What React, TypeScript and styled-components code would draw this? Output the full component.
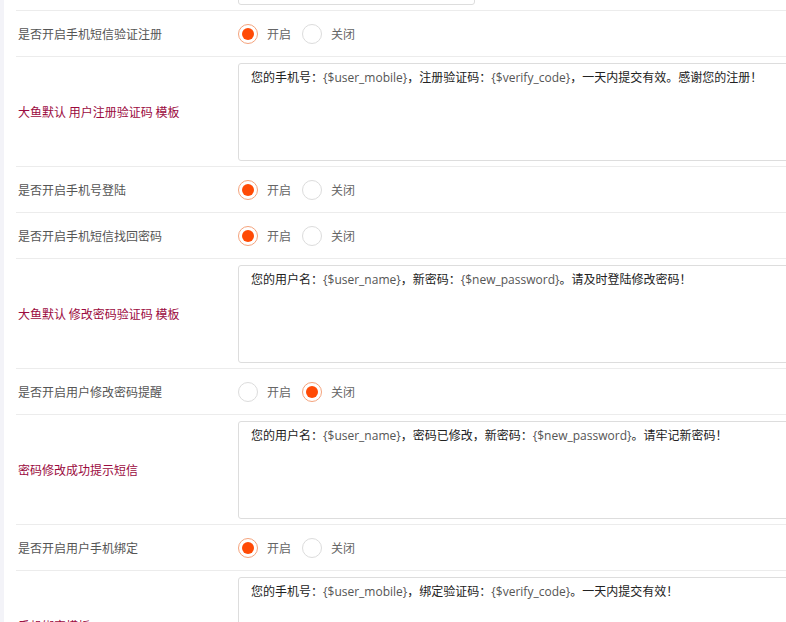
import React from "react";
import styled, { createGlobalStyle } from "styled-components";

const Global = createGlobalStyle`
  html, body { margin: 0; padding: 0; background: #fff; overflow: hidden; }
  body { font-family: "Open Sans", "Noto Sans CJK SC", sans-serif; font-size: 12px; color: #555; }
`;

const Page = styled.div`
  display: flex;
  width: 786px;
  height: 622px;
  overflow: hidden;
`;

const SideStrip = styled.div`
  width: 4px;
  flex: none;
  background: #f3f3f8;
`;

const Form = styled.div`
  flex: 1;
  padding-left: 12px;
  margin-top: -28px;
`;

const Row = styled.div<{ $tall?: boolean }>`
  display: flex;
  align-items: center;
  border-bottom: 1px solid #ececec;
  height: ${(p) => (p.$tall ? 109 : 45)}px;
  padding: 0;
`;

const TopRow = styled(Row)`
  height: 38px;
  align-items: flex-start;
`;

const Label = styled.div<{ $accent?: boolean }>`
  width: 220px;
  flex: none;
  padding-left: 2px;
  font-size: 12px;
  color: ${(p) => (p.$accent ? "#9b0a3e" : "#555")};
  font-family: "Noto Sans CJK SC", sans-serif;
`;

const Field = styled.div`
  flex: 1;
  min-width: 0;
`;

const Input = styled.div`
  width: 235px;
  height: 29px;
  border: 1px solid #ddd;
  border-radius: 3px;
  margin-top: 2px;
`;

const TextArea = styled.div`
  width: 580px;
  height: 82px;
  border: 1px solid #ddd;
  border-radius: 3px;
  box-sizing: content-box;
  padding: 6px 12px 8px;
  color: #222;
  font-size: 12px;
  line-height: 16px;
  font-family: "Open Sans", "Noto Sans CJK SC", sans-serif;
  white-space: nowrap;
`;

const Var = styled.span`
  color: #555;
`;

const RadioGroup = styled.div`
  display: flex;
  align-items: center;
`;

const RadioItem = styled.label`
  display: flex;
  align-items: center;
  margin-right: 11px;
  color: #666;
  font-family: "Noto Sans CJK SC", sans-serif;
  font-size: 12px;
`;

const Circle = styled.span<{ $on?: boolean }>`
  width: 18px;
  height: 18px;
  border-radius: 50%;
  border: 1px solid ${(p) => (p.$on ? "#f5a37c" : "#dcdcdc")};
  display: flex;
  align-items: center;
  justify-content: center;
  margin-right: 9px;
  background: #fff;
  &::after {
    content: "";
    display: ${(p) => (p.$on ? "block" : "none")};
    width: 12px;
    height: 12px;
    border-radius: 50%;
    background: #ff4a05;
  }
`;

const Radio = ({ on }: { on: boolean }) => (
  <RadioGroup>
    <RadioItem>
      <Circle $on={on} />
      开启
    </RadioItem>
    <RadioItem>
      <Circle $on={!on} />
      关闭
    </RadioItem>
  </RadioGroup>
);

type Part = string | { v: string };

const Tpl = ({ parts }: { parts: Part[] }) => (
  <TextArea>
    {parts.map((p, i) => (typeof p === "string" ? <React.Fragment key={i}>{p}</React.Fragment> : <Var key={i}>{p.v}</Var>))}
  </TextArea>
);

export default function App() {
  return (
    <Page>
      <Global />
      <SideStrip />
      <Form>
        <TopRow>
          <Label />
          <Field>
            <Input />
          </Field>
        </TopRow>
        <Row>
          <Label>是否开启手机短信验证注册</Label>
          <Radio on={true} />
        </Row>
        <Row $tall>
          <Label $accent>大鱼默认 用户注册验证码 模板</Label>
          <Field>
            <Tpl parts={["您的手机号：", { v: "{$user_mobile}" }, "，注册验证码：", { v: "{$verify_code}" }, "，一天内提交有效。感谢您的注册！"]} />
          </Field>
        </Row>
        <Row>
          <Label>是否开启手机号登陆</Label>
          <Radio on={true} />
        </Row>
        <Row>
          <Label>是否开启手机短信找回密码</Label>
          <Radio on={true} />
        </Row>
        <Row $tall>
          <Label $accent>大鱼默认 修改密码验证码 模板</Label>
          <Field>
            <Tpl parts={["您的用户名：", { v: "{$user_name}" }, "，新密码：", { v: "{$new_password}" }, "。请及时登陆修改密码！"]} />
          </Field>
        </Row>
        <Row>
          <Label>是否开启用户修改密码提醒</Label>
          <Radio on={false} />
        </Row>
        <Row $tall>
          <Label $accent>密码修改成功提示短信</Label>
          <Field>
            <Tpl parts={["您的用户名：", { v: "{$user_name}" }, "，密码已修改，新密码：", { v: "{$new_password}" }, "。请牢记新密码！"]} />
          </Field>
        </Row>
        <Row>
          <Label>是否开启用户手机绑定</Label>
          <Radio on={true} />
        </Row>
        <Row $tall>
          <Label $accent>手机绑定模板</Label>
          <Field>
            <Tpl parts={["您的手机号：", { v: "{$user_mobile}" }, "，绑定验证码：", { v: "{$verify_code}" }, "。一天内提交有效！"]} />
          </Field>
        </Row>
      </Form>
    </Page>
  );
}
